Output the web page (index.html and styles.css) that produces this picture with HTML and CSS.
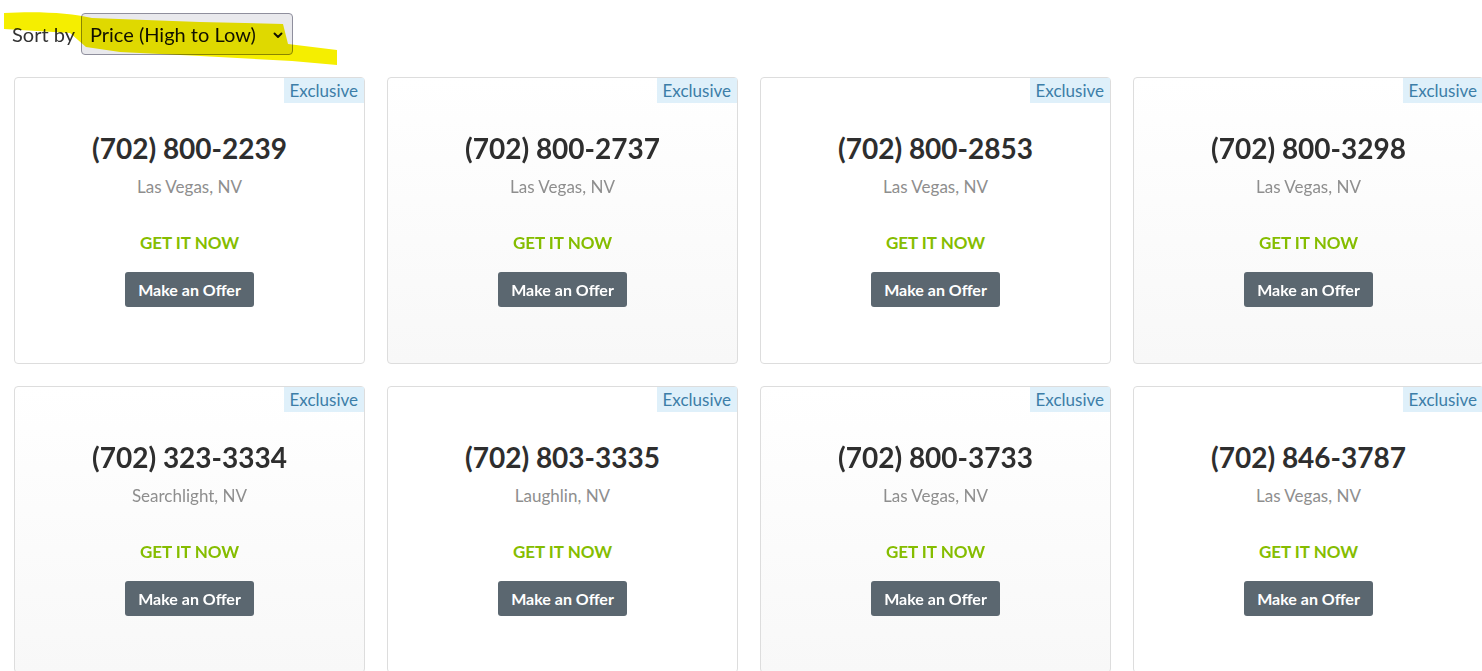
FILE: index.html
```html
<!DOCTYPE html>
<html lang="en">
<head>
    <meta charset="UTF-8">
    <meta name="viewport" content="width=device-width, initial-scale=1.0">
    <title>Numbers</title>
    <link rel="stylesheet" href="styles.css">
</head>
<body>
    <!-- Sort bar -->
    <div class="toolbar">
        <label for="sortBy" class="sort-label">Sort by</label>
        <span class="select-wrap">
            <select id="sortBy" class="sort-select">
                <option value="price-desc" selected>Price (High to Low)</option>
                <option value="price-asc">Price (Low to High)</option>
                <option value="newest">Newest</option>
            </select>
            <svg class="select-chevron" width="10" height="7" viewBox="0 0 10 7">
                <path d="M1.5 1.5 L5 5 L8.5 1.5" fill="none" stroke="#111" stroke-width="1.9" stroke-linecap="round" stroke-linejoin="round"/>
            </svg>
        </span>
        <svg class="marker" width="340" height="70" viewBox="0 0 340 70">
            <path d="M4,13 C40,11 70,13 92,18 L200,22 L283,24 L288,44 L337,50 L337,65 L292,61 L200,56 L120,52 L86,47 L70,33 L4,29 Z" fill="#f5ee00"/>
        </svg>
    </div>

    <!-- Number cards -->
    <div class="grid">
        <div class="card">
            <span class="badge">Exclusive</span>
            <div class="phone">(702) 800-2239</div>
            <div class="city">Las Vegas, NV</div>
            <div class="get-now">GET IT NOW</div>
            <button class="offer-btn">Make an Offer</button>
        </div>
        <div class="card shaded">
            <span class="badge">Exclusive</span>
            <div class="phone">(702) 800-2737</div>
            <div class="city">Las Vegas, NV</div>
            <div class="get-now">GET IT NOW</div>
            <button class="offer-btn">Make an Offer</button>
        </div>
        <div class="card">
            <span class="badge">Exclusive</span>
            <div class="phone">(702) 800-2853</div>
            <div class="city">Las Vegas, NV</div>
            <div class="get-now">GET IT NOW</div>
            <button class="offer-btn">Make an Offer</button>
        </div>
        <div class="card shaded">
            <span class="badge">Exclusive</span>
            <div class="phone">(702) 800-3298</div>
            <div class="city">Las Vegas, NV</div>
            <div class="get-now">GET IT NOW</div>
            <button class="offer-btn">Make an Offer</button>
        </div>

        <div class="card shaded">
            <span class="badge">Exclusive</span>
            <div class="phone">(702) 323-3334</div>
            <div class="city">Searchlight, NV</div>
            <div class="get-now">GET IT NOW</div>
            <button class="offer-btn">Make an Offer</button>
        </div>
        <div class="card">
            <span class="badge">Exclusive</span>
            <div class="phone">(702) 803-3335</div>
            <div class="city">Laughlin, NV</div>
            <div class="get-now">GET IT NOW</div>
            <button class="offer-btn">Make an Offer</button>
        </div>
        <div class="card shaded">
            <span class="badge">Exclusive</span>
            <div class="phone">(702) 800-3733</div>
            <div class="city">Las Vegas, NV</div>
            <div class="get-now">GET IT NOW</div>
            <button class="offer-btn">Make an Offer</button>
        </div>
        <div class="card">
            <span class="badge">Exclusive</span>
            <div class="phone">(702) 846-3787</div>
            <div class="city">Las Vegas, NV</div>
            <div class="get-now">GET IT NOW</div>
            <button class="offer-btn">Make an Offer</button>
        </div>
    </div>
</body>
</html>
```

FILE: styles.css
```css
body {
    margin: 0;
    padding: 0;
    background: #fff;
    color: #333;
    font-family: Lato, "Noto Sans", Arial, sans-serif;
    overflow-x: hidden;
}

/* Sort bar */
.toolbar {
    position: relative;
    display: flex;
    align-items: center;
    gap: 6px;
    padding: 13px 0 0 12px;
}

.sort-label {
    font-size: 20px;
    color: #333;
}

.select-wrap {
    position: relative;
    display: inline-block;
}

.sort-select {
    appearance: none;
    -webkit-appearance: none;
    height: 42px;
    width: 212px;
    padding: 0 30px 0 8px;
    font-family: inherit;
    font-size: 20px;
    color: #111;
    background-color: #e9e9ed;
    border: 1px solid #8f8f9d;
    border-radius: 4px;
}

.select-chevron {
    position: absolute;
    right: 10px;
    top: 19px;
    pointer-events: none;
}

.marker {
    position: absolute;
    left: 0;
    top: 0;
    mix-blend-mode: multiply;
    pointer-events: none;
}

/* Cards */
.grid {
    display: grid;
    grid-template-columns: repeat(4, 351px);
    gap: 22px;
    padding: 22px 0 0 14px;
}

.card {
    position: relative;
    box-sizing: border-box;
    height: 287px;
    display: flex;
    flex-direction: column;
    align-items: center;
    padding-top: 51px;
    border: 1px solid #ddd;
    border-radius: 4px;
    background: #fff;
    text-align: center;
}

.card.shaded {
    background: linear-gradient(to bottom, #fff 0%, #f8f8f8 100%);
}

.badge {
    position: absolute;
    top: 0;
    right: 0;
    height: 25px;
    line-height: 25px;
    padding: 0 6px;
    font-size: 17px;
    color: #3d7ea8;
    background-color: #dff0fa;
}

.phone {
    font-size: 28px;
    line-height: 38px;
    font-weight: 700;
    color: #2e2e2e;
}

.city {
    margin-top: 8px;
    font-size: 17px;
    line-height: 24px;
    color: #8e8e8e;
}

.get-now {
    margin-top: 32px;
    font-size: 17px;
    line-height: 24px;
    font-weight: 700;
    color: #85bd00;
}

.offer-btn {
    margin-top: 17px;
    height: 35px;
    padding: 0 13px;
    font-family: inherit;
    font-size: 16px;
    font-weight: 700;
    color: #fff;
    background-color: #5b6770;
    border: none;
    border-radius: 3px;
}
```
